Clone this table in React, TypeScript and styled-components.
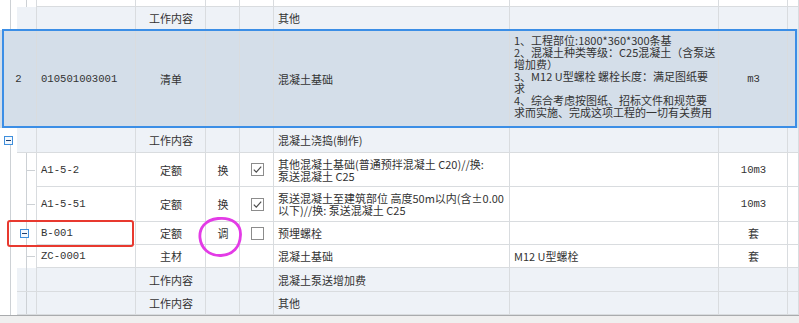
import React from 'react';
import styled, { createGlobalStyle, css } from 'styled-components';

const GlobalStyle = createGlobalStyle`
  html, body {
    margin: 0;
    padding: 0;
    background: #ffffff;
  }
  body {
    font-family: "Noto Sans CJK SC", "Liberation Sans", sans-serif;
    font-size: 11px;
    color: #333333;
  }
`;

const COLUMNS = '17px 20px 99px 70px 34px 34px 236px 209px 69px 11px';
const GRID = '#d9dcdf';
const TREE = '#cdd1d5';

type Tone = 'white' | 'light' | 'selected';

const tones: Record<Tone, string> = {
  white: '#ffffff',
  light: '#eef2f7',
  selected: '#d4dee9',
};

const Sheet = styled.div`
  width: 799px;
  height: 323px;
  overflow: hidden;
  display: flex;
  flex-direction: column;
`;

const Row = styled.div<{ $h: number; $tone: Tone }>`
  position: relative;
  flex: none;
  display: grid;
  grid-template-columns: ${COLUMNS};
  height: ${p => p.$h}px;
  background: ${p => tones[p.$tone]};

  ${p =>
    p.$tone === 'selected' &&
    css`
      &::after {
        content: '';
        position: absolute;
        left: 2px;
        right: 2px;
        top: -1px;
        bottom: 0;
        border: 2px solid #3b8ee6;
        pointer-events: none;
      }
    `}
`;

const Cell = styled.div<{ $align?: 'left' | 'center'; $span?: number; $top?: boolean; $mono?: boolean }>`
  display: flex;
  align-items: ${p => (p.$top ? 'flex-start' : 'center')};
  justify-content: ${p => (p.$align === 'center' ? 'center' : 'flex-start')};
  grid-column: span ${p => p.$span ?? 1};
  padding: ${p => (p.$top ? '4px 3px 0 4px' : '0 3px 0 4px')};
  min-width: 0;
  overflow: hidden;
  white-space: nowrap;
  line-height: 12px;
  border-right: 1px solid ${GRID};
  border-bottom: 1px solid ${GRID};
  ${p =>
    p.$mono &&
    css`
      font-family: "Liberation Mono", "Noto Sans CJK SC", monospace;
      font-size: 10.6px;
    `}
`;

const Lines = styled.div`
  display: flex;
  flex-direction: column;
  line-height: 12px;
`;

const Gutter = styled.div<{ $line?: 'full' | 'lower' }>`
  display: flex;
  align-items: center;
  justify-content: center;
  background-color: #ffffff;
  ${p =>
    p.$line &&
    css`
      background-image: linear-gradient(${TREE}, ${TREE});
      background-repeat: no-repeat;
      background-size: 1px ${p.$line === 'full' ? '100%' : '50%'};
      background-position: 10px 100%;
    `}
`;

const Branch = styled.div<{ $tick?: boolean; $fill?: boolean }>`
  display: flex;
  align-items: center;
  padding-left: 3px;
  border-right: 1px solid ${GRID};
  background-color: ${p => (p.$fill ? 'transparent' : '#ffffff')};
  background-image: linear-gradient(${TREE}, ${TREE})
    ${p => (p.$tick ? `, linear-gradient(${TREE}, ${TREE})` : '')};
  background-repeat: no-repeat;
  background-size: 1px 100% ${p => (p.$tick ? ', 9px 1px' : '')};
  background-position: 9px 0 ${p => (p.$tick ? ', 9px 50%' : '')};
  ${p => p.$fill && css`border-bottom: 1px solid ${GRID};`}
`;

const Expander = styled.span`
  position: relative;
  display: block;
  width: 9px;
  height: 9px;
  box-sizing: border-box;
  border: 1px solid #3f8fdc;
  background: #f3f8fe;

  &::after {
    content: '';
    position: absolute;
    left: 1px;
    right: 1px;
    top: 3px;
    height: 1px;
    background: #1d3f6e;
  }
`;

const Highlight = styled.div`
  position: absolute;
  z-index: 2;
  left: 7px;
  top: -2px;
  width: 127px;
  height: 27px;
  box-sizing: border-box;
  border: 2px solid #e8392f;
  border-radius: 3px;
  pointer-events: none;
`;

const Scribble = styled.svg`
  position: absolute;
  z-index: 2;
  left: 197px;
  top: -6px;
  pointer-events: none;
`;

const Footer = styled.div`
  flex: none;
  height: 8px;
  box-sizing: border-box;
  border-top: 1px solid #a9abad;
  background: #efefef;
`;

const CheckBox = ({ checked }: { checked?: boolean }) => (
  <svg width="13" height="13" viewBox="0 0 13 13">
    <rect x="0.5" y="0.5" width="12" height="12" fill="#ffffff" stroke="#8c8c8c" />
    {checked && (
      <path d="M2.8 6.6 L5.3 9.2 L10.2 3.6" fill="none" stroke="#4d4d4d" strokeWidth="1.2" />
    )}
  </svg>
);

const Blank = () => <Cell />;

const spec = [
  '1、工程部位:1800*360*300条基',
  '2、混凝土种类等级：C25混凝土（含泵送',
  '增加费）',
  '3、M12 U型螺栓 螺栓长度：满足图纸要',
  '求',
  '4、综合考虑按图纸、招标文件和规范要',
  '求而实施、完成这项工程的一切有关费用',
];

interface QuotaProps {
  code: string;
  name: string[];
}

const QuotaRow = ({ code, name, h }: QuotaProps & { h: number }) => (
  <Row $h={h} $tone="white">
    <Gutter $line="full" />
    <Branch $tick />
    <Cell $mono>{code}</Cell>
    <Cell $align="center">定额</Cell>
    <Cell $align="center">换</Cell>
    <Cell $align="center">
      <CheckBox checked />
    </Cell>
    <Cell>
      <Lines>
        {name.map(line => (
          <span key={line}>{line}</span>
        ))}
      </Lines>
    </Cell>
    <Blank />
    <Cell $align="center" $mono>10m3</Cell>
    <Blank />
  </Row>
);

const WorkRow = ({ h, text, first }: { h: number; text: string; first?: boolean }) => (
  <Row $h={h} $tone="light">
    <Gutter $line={first ? 'lower' : 'full'}>{first && <Expander />}</Gutter>
    {first ? <Cell /> : <Branch $fill />}
    <Blank />
    <Cell $align="center">工作内容</Cell>
    <Blank />
    <Blank />
    <Cell>{text}</Cell>
    <Blank />
    <Blank />
    <Blank />
  </Row>
);

export default function App() {
  return (
    <>
      <GlobalStyle />
      <Sheet>
        <Row $h={7} $tone="white">
          <Gutter $line="full" />
          <Branch />
          <Blank />
          <Blank />
          <Blank />
          <Blank />
          <Blank />
          <Blank />
          <Blank />
          <Blank />
        </Row>

        <Row $h={23} $tone="light">
          <Gutter $line="full" />
          <Cell />
          <Blank />
          <Cell $align="center">工作内容</Cell>
          <Blank />
          <Blank />
          <Cell>其他</Cell>
          <Blank />
          <Blank />
          <Blank />
        </Row>

        <Row $h={98} $tone="selected">
          <Cell $span={2} $align="center" $mono>2</Cell>
          <Cell $mono>010501003001</Cell>
          <Cell $align="center">清单</Cell>
          <Blank />
          <Blank />
          <Cell>混凝土基础</Cell>
          <Cell $top>
            <Lines>
              {spec.map(line => (
                <span key={line}>{line}</span>
              ))}
            </Lines>
          </Cell>
          <Cell $align="center" $mono>m3</Cell>
          <Blank />
        </Row>

        <WorkRow h={25} text="混凝土浇捣(制作)" first />

        <QuotaRow h={34} code="A1-5-2" name={['其他混凝土基础(普通预拌混凝土 C20)//换:', '泵送混凝土 C25']} />
        <QuotaRow
          h={35}
          code="A1-5-51"
          name={['泵送混凝土至建筑部位 高度50m以内(含±0.00', '以下)//换: 泵送混凝土 C25']}
        />

        <Row $h={23} $tone="white">
          <Gutter $line="full" />
          <Branch>
            <Expander />
          </Branch>
          <Cell $mono>B-001</Cell>
          <Cell $align="center">定额</Cell>
          <Cell $align="center">调</Cell>
          <Cell $align="center">
            <CheckBox />
          </Cell>
          <Cell>预埋螺栓</Cell>
          <Blank />
          <Cell $align="center">套</Cell>
          <Blank />
          <Highlight />
          <Scribble width="46" height="42" viewBox="0 0 46 42">
            <path
              d="M21 2.5 C35 1, 44 8, 43.5 19 C43 31, 36 39, 24 39.5 C12 40, 4 32, 3 22 C2 12, 8 4, 21 2.5"
              fill="none"
              stroke="#e33be6"
              strokeWidth="2.8"
              strokeLinecap="round"
            />
          </Scribble>
        </Row>

        <Row $h={23} $tone="white">
          <Gutter $line="full" />
          <Branch $tick />
          <Cell $mono>ZC-0001</Cell>
          <Cell $align="center">主材</Cell>
          <Blank />
          <Blank />
          <Cell>混凝土基础</Cell>
          <Cell>M12 U型螺栓</Cell>
          <Cell $align="center">套</Cell>
          <Blank />
        </Row>

        <WorkRow h={24} text="混凝土泵送增加费" />
        <WorkRow h={23} text="其他" />

        <Footer />
      </Sheet>
    </>
  );
}
